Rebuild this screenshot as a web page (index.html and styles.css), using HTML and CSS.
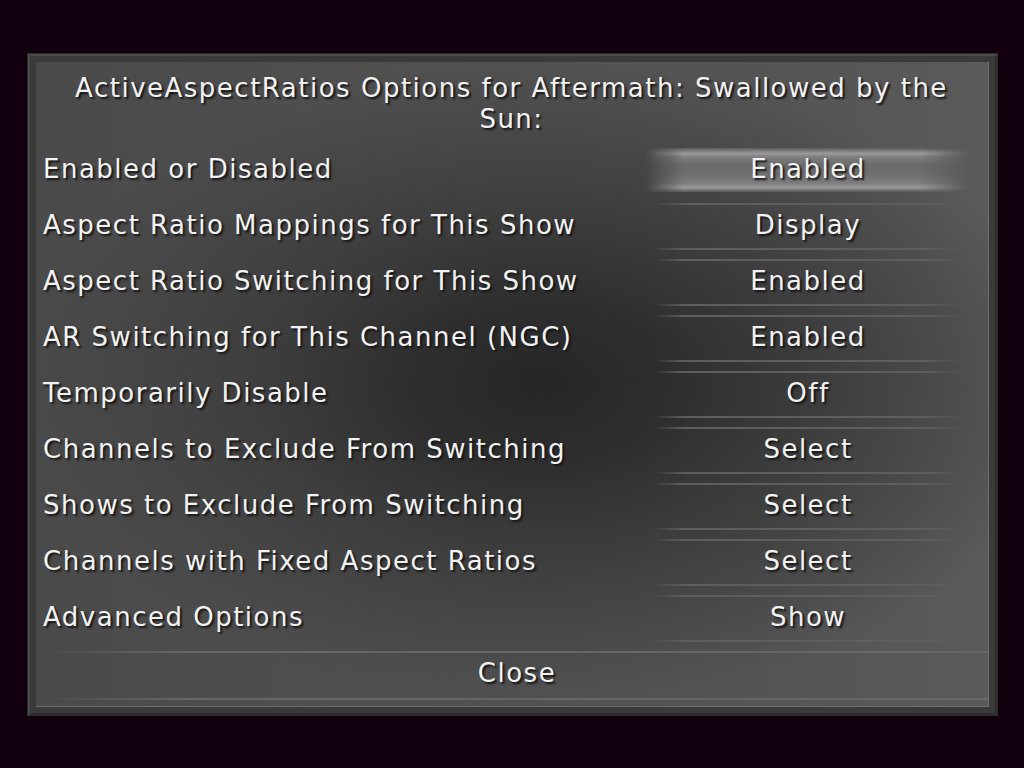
FILE: index.html
```html
<!DOCTYPE html>
<html>
<head>
<meta charset="utf-8">
<link rel="stylesheet" href="styles.css">
</head>
<body>
<div class="frame">
  <div class="panel">
    <div class="title">ActiveAspectRatios Options for Aftermath: Swallowed by the Sun:</div>
    <div class="rows">
      <div class="row"><span class="label">Enabled or Disabled</span><span class="value focus">Enabled</span></div>
      <div class="row"><span class="label">Aspect Ratio Mappings for This Show</span><span class="value">Display</span></div>
      <div class="row"><span class="label">Aspect Ratio Switching for This Show</span><span class="value">Enabled</span></div>
      <div class="row"><span class="label">AR Switching for This Channel (NGC)</span><span class="value">Enabled</span></div>
      <div class="row"><span class="label">Temporarily Disable</span><span class="value">Off</span></div>
      <div class="row"><span class="label">Channels to Exclude From Switching</span><span class="value">Select</span></div>
      <div class="row"><span class="label">Shows to Exclude From Switching</span><span class="value">Select</span></div>
      <div class="row"><span class="label">Channels with Fixed Aspect Ratios</span><span class="value">Select</span></div>
      <div class="row"><span class="label">Advanced Options</span><span class="value">Show</span></div>
    </div>
    <div class="close-row"><span class="close">Close</span></div>
  </div>
</div>
</body>
</html>
```

FILE: styles.css
```css
html, body {
  margin: 0;
  padding: 0;
  background: #12000f;
  width: 1024px;
  height: 768px;
  overflow: hidden;
}
body {
  font-family: "DejaVu Sans", sans-serif;
  font-size: 26px;
  letter-spacing: 1.5px;
  color: #f2f2f2;
}
.frame {
  box-sizing: border-box;
  margin: 53px 0 0 27px;
  width: 971px;
  height: 663px;
  padding: 8px;
  background: #3a3a3a;
  border: 1px solid #2e2e2e;
  box-shadow: inset 2px 2px 0 #4a4a4a, inset -2px -2px 0 #2f2f2f;
}
.panel {
  box-sizing: border-box;
  height: 100%;
  border-right: 1px solid #6e6e6e;
  border-bottom: 1px solid #6e6e6e;
  background:
    radial-gradient(ellipse 55% 50% at 53% 50%, #262626 0%, #2e2e2e 25%, #3e3e3e 55%, rgba(70,70,70,0) 100%),
    linear-gradient(to right, #4a4a4a 0%, #505050 40%, #555 80%, #5a5a5a 100%);
  padding: 11px 0 0 7px;
  text-shadow: 2px 2px 2px #151515;
}
.title {
  text-align: center;
  line-height: 31px;
  padding: 0 36px 0 28px;
  height: 68px;
}
.rows {
  display: flex;
  flex-direction: column;
}
.row {
  display: flex;
  align-items: center;
  height: 56px;
}
.label {
  flex: 1;
  white-space: nowrap;
}
.value {
  position: relative;
  z-index: 0;
  width: 310px;
  margin-right: 25px;
  height: 56px;
  display: flex;
  align-items: center;
  justify-content: center;
}
.value::before {
  content: "";
  position: absolute;
  z-index: -1;
  left: 0;
  right: 0;
  top: 6px;
  height: 47px;
  border-top: 2px solid #5e5e5e;
  border-bottom: 2px solid #5e5e5e;
  box-sizing: border-box;
  -webkit-mask-image: linear-gradient(to right, transparent 0%, #000 10%, #000 88%, transparent 100%);
  mask-image: linear-gradient(to right, transparent 0%, #000 10%, #000 88%, transparent 100%);
}
.value.focus::before {
  left: -8px;
  right: -6px;
  top: 7px;
  height: 44px;
  border: 0;
  background: linear-gradient(to bottom,
    #5a5a5a 0%, #9a9a9a 12%, #7c7c7c 22%, #6a6a6a 40%, #6e6e6e 60%, #7e7e7e 80%, #9a9a9a 90%, #5a5a5a 100%);
  -webkit-mask-image: linear-gradient(to right, transparent 0%, #000 12%, #000 85%, transparent 100%);
  mask-image: linear-gradient(to right, transparent 0%, #000 12%, #000 85%, transparent 100%);
}
.close-row {
  position: relative;
  z-index: 0;
  height: 56px;
  display: flex;
  align-items: center;
  justify-content: center;
  padding-left: 3px;
}
.close-row::before {
  content: "";
  position: absolute;
  z-index: -1;
  left: 0;
  right: 0;
  top: 6px;
  height: 49px;
  box-sizing: border-box;
  border-top: 2px solid #676767;
  border-bottom: 2px solid #676767;
  -webkit-mask-image: linear-gradient(to right, transparent 0%, #000 15%, #000 100%);
  mask-image: linear-gradient(to right, transparent 0%, #000 15%, #000 100%);
}
```
